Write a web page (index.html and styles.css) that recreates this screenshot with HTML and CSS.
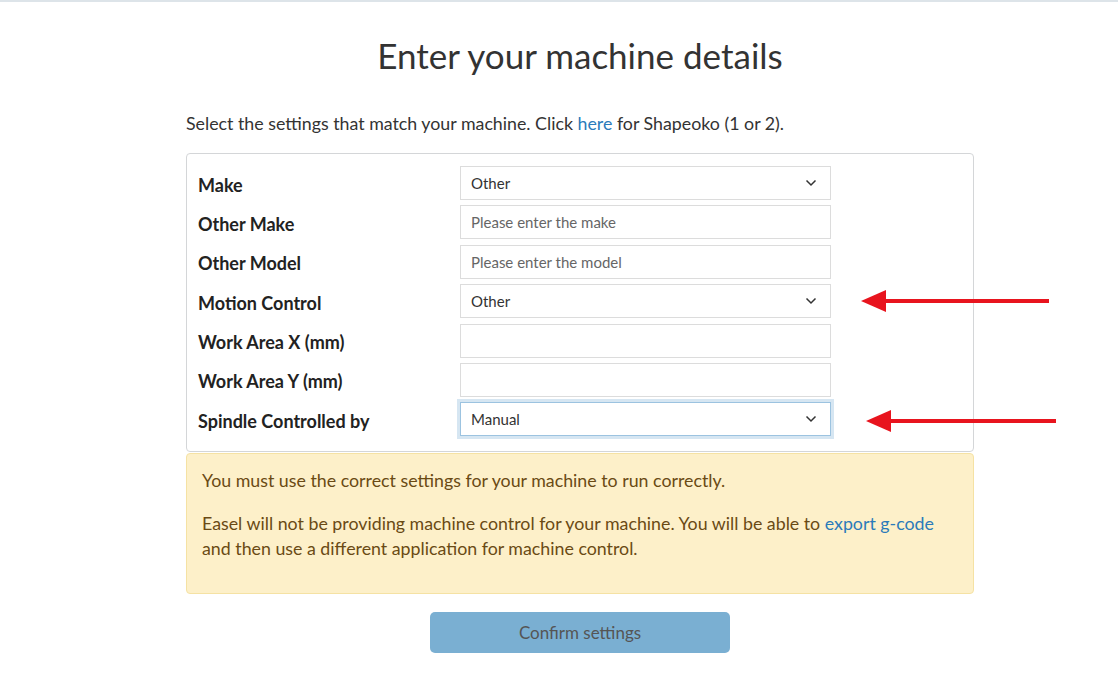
FILE: index.html
```html
<!DOCTYPE html>
<html lang="en">
<head>
    <meta charset="UTF-8">
    <meta name="viewport" content="width=device-width, initial-scale=1.0">
    <title>Machine Setup</title>
    <link rel="stylesheet" href="styles.css">
</head>
<body>
    <div class="page">
        <h1 class="title">Enter your machine details</h1>
        <p class="intro">Select the settings that match your machine. Click <a href="#">here</a> for Shapeoko (1 or 2).</p>

        <div class="panel">
            <div class="row">
                <label for="make">Make</label>
                <select id="make"><option>Other</option></select>
            </div>
            <div class="row">
                <label for="other-make">Other Make</label>
                <input type="text" id="other-make" placeholder="Please enter the make">
            </div>
            <div class="row">
                <label for="other-model">Other Model</label>
                <input type="text" id="other-model" placeholder="Please enter the model">
            </div>
            <div class="row">
                <label for="motion">Motion Control</label>
                <select id="motion"><option>Other</option></select>
            </div>
            <div class="row">
                <label for="area-x">Work Area X (mm)</label>
                <input type="text" id="area-x">
            </div>
            <div class="row">
                <label for="area-y">Work Area Y (mm)</label>
                <input type="text" id="area-y">
            </div>
            <div class="row">
                <label for="spindle">Spindle Controlled by</label>
                <select id="spindle" class="focused"><option>Manual</option></select>
            </div>

            <svg class="arrow arrow-motion" width="192" height="26" viewBox="0 0 192 26">
                <polygon points="0,13 25,2 25,24" fill="#e8141e"/>
                <rect x="22" y="11" width="166" height="4" fill="#e8141e"/>
            </svg>
            <svg class="arrow arrow-spindle" width="192" height="26" viewBox="0 0 192 26">
                <polygon points="0,13 25,2 25,24" fill="#e8141e"/>
                <rect x="22" y="11" width="168" height="4" fill="#e8141e"/>
            </svg>
        </div>

        <div class="alert">
            <p>You must use the correct settings for your machine to run correctly.</p>
            <p>Easel will not be providing machine control for your machine. You will be able to <a href="#">export g-code</a><br>and then use a different application for machine control.</p>
        </div>

        <div class="actions">
            <button type="button" class="confirm">Confirm settings</button>
        </div>
    </div>
</body>
</html>
```

FILE: styles.css
```css
* {
    box-sizing: border-box;
}

body {
    margin: 0;
    font-family: Lato, "Open Sans", sans-serif;
    color: #333;
    background: #fff;
    border-top: 2px solid #dde4e9;
}

a {
    color: #2b7bba;
    text-decoration: none;
}

.page {
    width: 788px;
    margin-left: 186px;
}

.title {
    margin: 32px 0 0;
    font-size: 35px;
    font-weight: 400;
    line-height: 42px;
    text-align: center;
    color: #333;
}

.intro {
    margin: 35px 0 18px;
    font-size: 17.8px;
    line-height: 24px;
}

.panel {
    position: relative;
    border: 1px solid #d4d6d8;
    border-radius: 4px;
    padding: 12px 11px 15px;
    display: flex;
    flex-direction: column;
    gap: 5.4px;
}

.row {
    display: grid;
    grid-template-columns: 262px 371px;
    align-items: center;
}

.row label {
    font-size: 18px;
    font-weight: 700;
    color: #222;
    padding-top: 3px;
}

.row input[type="text"],
.row select {
    width: 100%;
    height: 34px;
    padding: 0 10px;
    border: 1px solid #dcdcdc;
    border-radius: 0;
    background: #fff;
    font-family: Lato, sans-serif;
    font-size: 15px;
    color: #333;
    outline: none;
}

.row input::placeholder {
    color: #666;
}

.row select {
    appearance: none;
    -webkit-appearance: none;
    background-image: url("data:image/svg+xml;utf8,<svg xmlns='http://www.w3.org/2000/svg' width='12' height='8' viewBox='0 0 12 8'><path d='M1.5 1.5 L6 6 L10.5 1.5' fill='none' stroke='%23333' stroke-width='1.5'/></svg>");
    background-repeat: no-repeat;
    background-position: right 13px center;
}

.row select.focused {
    border-color: #9cc3e0;
    box-shadow: 0 0 0 3px #d6e6f2;
}

.arrow {
    position: absolute;
}

.arrow-motion {
    left: 674px;
    top: 134px;
}

.arrow-spindle {
    left: 679px;
    top: 254px;
}

.alert {
    background: #fdf0c9;
    border: 1px solid #f5e2a4;
    border-radius: 4px;
    padding: 14px 15px 32px;
    color: #6a4a14;
    font-size: 17.8px;
    line-height: 25px;
    margin-top: 1px;
}

.alert p {
    margin: 0 0 18px;
}

.alert p:last-child {
    margin-bottom: 0;
}

.actions {
    display: flex;
    justify-content: center;
    margin-top: 18px;
}

.confirm {
    width: 300px;
    height: 41px;
    border: none;
    border-radius: 5px;
    background: #7aafd2;
    color: #555;
    font-family: Lato, sans-serif;
    font-size: 17px;
    cursor: pointer;
}
```
